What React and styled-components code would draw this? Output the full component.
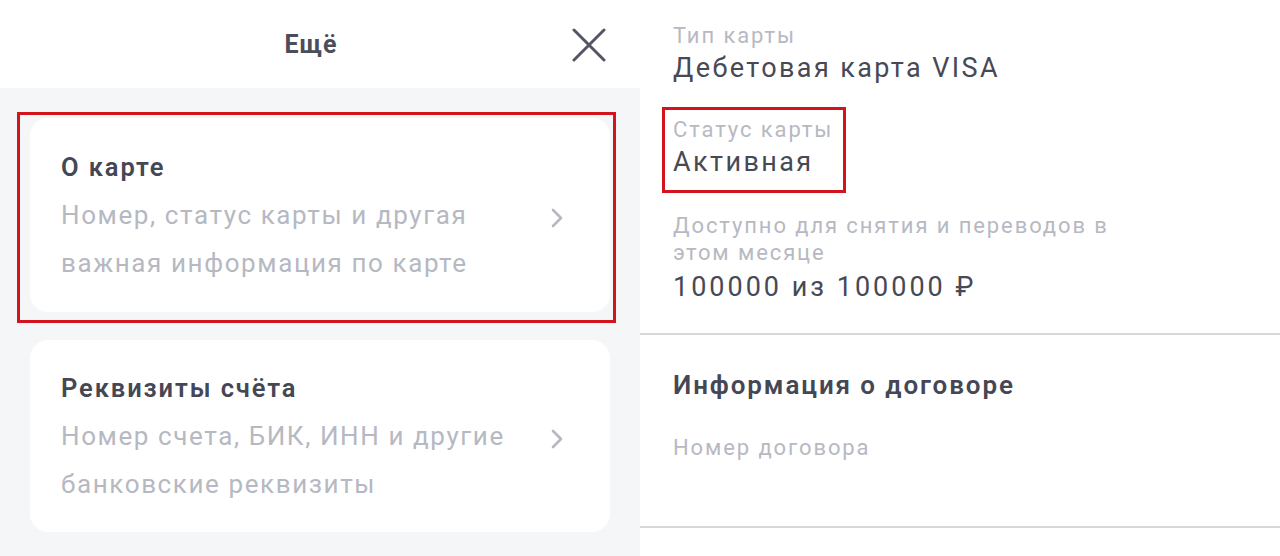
import React from "react";
import styled, { createGlobalStyle } from "styled-components";

const Global = createGlobalStyle`
  * { box-sizing: border-box; }
  html, body { margin: 0; padding: 0; background: #ffffff; }
  body { font-family: Roboto, "Noto Sans", sans-serif; -webkit-font-smoothing: antialiased; }
`;

const Page = styled.div`
  display: flex;
  width: 1280px;
  height: 556px;
  overflow: hidden;
`;

const LeftPanel = styled.section`
  width: 640px;
  flex: none;
  background: #f5f6f8;
  display: flex;
  flex-direction: column;
`;

const Header = styled.header`
  height: 88px;
  background: #ffffff;
  display: grid;
  grid-template-columns: 1fr auto 1fr;
  align-items: center;
  padding: 0 34px 0 0;
`;

const HeaderTitle = styled.h1`
  grid-column: 2;
  margin: 0 0 0 16px;
  font-size: 25px;
  font-weight: 700;
  letter-spacing: 1px;
  color: #4b4d5a;
  line-height: 32px;
  padding-top: 2px;
`;

const CloseButton = styled.button`
  grid-column: 3;
  justify-self: end;
  width: 34px;
  height: 34px;
  padding: 0;
  border: 0;
  background: none;
  display: flex;
  align-items: center;
  justify-content: center;
  margin-top: 1px;
`;

const MenuList = styled.div`
  display: flex;
  flex-direction: column;
  gap: 28px;
  padding: 30px 30px 0 30px;
`;

const CardWrap = styled.div`
  position: relative;
`;

const Highlight = styled.div`
  position: absolute;
  border: 3px solid #d4141c;
  pointer-events: none;
  left: ${(p) => p.$left}px;
  top: ${(p) => p.$top}px;
  width: ${(p) => p.$width}px;
  height: ${(p) => p.$height}px;
`;

const Card = styled.div`
  background: #ffffff;
  border-radius: 18px;
  padding: 37px 46px 21px 31px;
  display: flex;
  align-items: center;
  justify-content: space-between;
  height: ${(p) => p.$height}px;
`;

const CardText = styled.div`
  display: flex;
  flex-direction: column;
`;

const CardTitle = styled.div`
  font-size: 25.5px;
  font-weight: 600;
  letter-spacing: 1.9px;
  line-height: 32px;
  color: #454754;
  margin-top: -8px;
`;

const CardSubtitle = styled.div`
  font-size: 26px;
  letter-spacing: 1.6px;
  line-height: 48px;
  color: #b6b8c2;
  margin-top: 8px;
  width: 470px;
`;

const Chevron = styled.svg`
  flex: none;
  width: 14px;
  height: 22px;
  margin-top: -10px;
`;

const RightPanel = styled.section`
  flex: 1;
  background: #ffffff;
  display: flex;
  flex-direction: column;
`;

const Fields = styled.div`
  display: flex;
  flex-direction: column;
  align-items: flex-start;
  gap: 31px;
  padding: 22px 33px 29px 33px;
`;

const Field = styled.div`
  position: relative;
  display: flex;
  flex-direction: column;
  margin-top: ${(p) => p.$shift || 0}px;
`;

const Label = styled.div`
  font-size: 22px;
  line-height: 27px;
  letter-spacing: 1.9px;
  color: #b7b9c2;
  max-width: ${(p) => (p.$narrow ? "450px" : "none")};
`;

const Value = styled.div`
  font-size: 27px;
  line-height: 34px;
  letter-spacing: ${(p) => (p.$wide ? 3 : 2.4)}px;
  color: #474955;
  margin-top: ${(p) => p.$gap || 2}px;
`;

const Divider = styled.hr`
  margin: 0;
  border: 0;
  height: 2px;
  background: #d7d7da;
`;

const Section = styled.div`
  height: 191px;
  padding: 34px 33px 0 33px;
  display: flex;
  flex-direction: column;
`;

const SectionTitle = styled.h2`
  margin: 0;
  font-size: 26px;
  font-weight: 600;
  line-height: 32px;
  letter-spacing: 1.9px;
  color: #454754;
`;

const SectionLabel = styled(Label)`
  margin-top: 33px;
`;

const HiddenValue = styled.div`
  font-size: 22px;
  line-height: 24px;
  color: #f1f1f4;
`;

const ChevronIcon = () => (
  <Chevron viewBox="0 0 14 22" fill="none">
    <path
      d="M3 3 L11 11 L3 19"
      stroke="#b6b8c2"
      strokeWidth="2.6"
      strokeLinecap="round"
      strokeLinejoin="round"
    />
  </Chevron>
);

const CloseIcon = () => (
  <svg width="34" height="34" viewBox="0 0 34 34" fill="none">
    <path
      d="M2 2 L32 32 M32 2 L2 32"
      stroke="#545666"
      strokeWidth="3"
      strokeLinecap="round"
    />
  </svg>
);

const MenuCard = ({ title, subtitle, height }) => (
  <Card $height={height}>
    <CardText>
      <CardTitle>{title}</CardTitle>
      <CardSubtitle>{subtitle}</CardSubtitle>
    </CardText>
    <ChevronIcon />
  </Card>
);

export default function App() {
  return (
    <>
      <Global />
      <Page>
        <LeftPanel>
          <Header>
            <HeaderTitle>Ещё</HeaderTitle>
            <CloseButton aria-label="Закрыть">
              <CloseIcon />
            </CloseButton>
          </Header>
          <MenuList>
            <CardWrap>
              <MenuCard
                title="О карте"
                subtitle="Номер, статус карты и другая важная информация по карте"
                height={194}
              />
              <Highlight $left={-13} $top={-6} $width={599} $height={211} />
            </CardWrap>
            <CardWrap>
              <MenuCard
                title="Реквизиты счёта"
                subtitle="Номер счета, БИК, ИНН и другие банковские реквизиты"
                height={192}
              />
            </CardWrap>
          </MenuList>
        </LeftPanel>
        <RightPanel>
          <Fields>
            <Field>
              <Label>Тип карты</Label>
              <Value>Дебетовая карта VISA</Value>
            </Field>
            <Field>
              <Label>Статус карты</Label>
              <Value>Активная</Value>
              <Highlight $left={-11} $top={-9} $width={184} $height={86} />
            </Field>
            <Field $shift={2}>
              <Label $narrow>Доступно для снятия и переводов в этом месяце</Label>
              <Value $gap={4} $wide>100000 из 100000 ₽</Value>
            </Field>
          </Fields>
          <Divider />
          <Section>
            <SectionTitle>Информация о договоре</SectionTitle>
            <SectionLabel>Номер договора</SectionLabel>
            <HiddenValue>&nbsp;</HiddenValue>
          </Section>
          <Divider />
        </RightPanel>
      </Page>
    </>
  );
}
